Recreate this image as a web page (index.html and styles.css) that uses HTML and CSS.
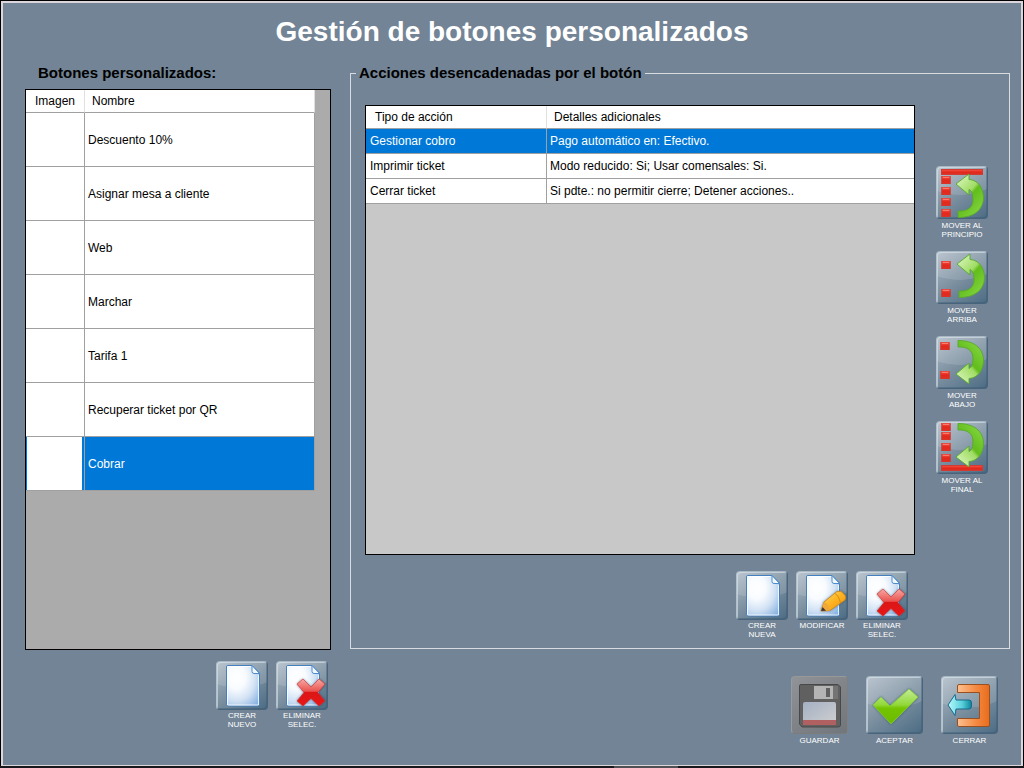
FILE: index.html
```html
<!DOCTYPE html>
<html lang="es">
<head>
<meta charset="utf-8">
<meta name="viewport" content="width=device-width, initial-scale=1">
<title>Gestión de botones personalizados</title>
<link rel="stylesheet" href="styles.css">
</head>
<body>
<svg class="defs" aria-hidden="true">
  <defs>
    <linearGradient id="green" x1="0" y1="0" x2=".7" y2="1"><stop offset="0" stop-color="#e4facc"/><stop offset=".5" stop-color="#a0dc64"/><stop offset=".58" stop-color="#62bc1c"/><stop offset="1" stop-color="#80d43c"/></linearGradient>
    <linearGradient id="red" x1="0" y1="0" x2="0" y2="1"><stop offset="0" stop-color="#f4584c"/><stop offset=".5" stop-color="#e4281c"/><stop offset="1" stop-color="#dc3024"/></linearGradient>
    <radialGradient id="paper" cx=".3" cy=".3" r=".95"><stop offset="0" stop-color="#fff"/><stop offset=".3" stop-color="#f8fbff"/><stop offset=".6" stop-color="#d2e2f4"/><stop offset="1" stop-color="#7caade"/></radialGradient>
    <linearGradient id="pencil" x1="0" y1="0" x2="1" y2="1"><stop offset="0" stop-color="#ffe070"/><stop offset=".5" stop-color="#fdb424"/><stop offset="1" stop-color="#f08c08"/></linearGradient>
    <linearGradient id="cross" x1="0" y1="0" x2="0" y2="1"><stop offset="0" stop-color="#f8a8a4"/><stop offset=".45" stop-color="#ea5450"/><stop offset=".5" stop-color="#dc1818"/><stop offset="1" stop-color="#e81818"/></linearGradient>
    <linearGradient id="tick" x1="0" y1="0" x2="0" y2="1"><stop offset="0" stop-color="#c4ec94"/><stop offset=".45" stop-color="#92d83c"/><stop offset=".55" stop-color="#74c400"/><stop offset="1" stop-color="#6cba00"/></linearGradient>
    <linearGradient id="orange" x1="0" y1="0" x2="1" y2="0"><stop offset="0" stop-color="#fcc090"/><stop offset=".6" stop-color="#f48840"/><stop offset="1" stop-color="#e86c1c"/></linearGradient>
    <linearGradient id="cyan" x1="0" y1="0" x2="1" y2="0"><stop offset="0" stop-color="#b8fafc"/><stop offset=".6" stop-color="#58d0dc"/><stop offset="1" stop-color="#0c8498"/></linearGradient>
    <linearGradient id="label" x1="0" y1="0" x2="1" y2="1"><stop offset="0" stop-color="#a4b0c4"/><stop offset="1" stop-color="#d0d0d0"/></linearGradient>
    <filter id="shadow" x="-20%" y="-20%" width="140%" height="140%"><feDropShadow dx="0" dy="0" stdDeviation="1" flood-color="#203848" flood-opacity=".6"/></filter>
  </defs>
  <symbol id="arrow" viewBox="0 0 52 53">
    <path d="M20 18 33 8V13.500C42 14 47.500 22 47.500 32 47 44 38 51.500 22 51.500V45C32 45.500 37 41 37 34 37 28 36 25 33 23.500V29Z" fill="url(#green)" stroke="#58a82c" stroke-width=".9" stroke-linejoin="round"/>
  </symbol>
  <symbol id="block" viewBox="0 0 10 8">
    <rect x=".5" y="0" width="9" height="8" fill="url(#red)" stroke="#c83c34" stroke-width=".6"/><path d="M2 1.500H8" stroke="#f87c70"/>
  </symbol>
  <symbol id="bar" viewBox="0 0 42 6">
    <rect x=".5" y=".5" width="41" height="5" fill="url(#red)" stroke="#d03c34"/>
  </symbol>
  <symbol id="sheet" viewBox="0 0 52 49">
    <path d="M12 4.500H36L43.500 12V43Q43.500 45 41 45H13Q10.500 45 10.500 43V6Q10.500 4.500 12 4.500Z" fill="url(#paper)" stroke="#4480c0"/>
    <path d="M11.500 44V5.500H35M11.500 44H42.500V14" fill="none" stroke="#fff" opacity=".8"/>
    <path d="M36 4.500V10.500Q36 12.500 38 12.500H43.500Z" fill="#f0f7ff" stroke="#4c8ccc"/>
  </symbol>
  <symbol id="delete" viewBox="0 0 52 49">
    <use href="#sheet"/>
    <path d="M27 18 35 26 43 18 49 23 42 31.500 49 40 43 45 35 37.500 27 45 21 40 28 31.500 21 23Z" fill="url(#cross)" stroke="#c83030" stroke-width=".6" stroke-linejoin="round" filter="url(#shadow)"/>
  </symbol>
</svg>

<div class="window">
  <h1 class="title">Gestión de botones personalizados</h1>

  <main class="main">
    <section class="buttons-panel">
      <h2 class="caption">Botones personalizados:</h2>
      <div class="list list-dark">
        <table class="grid grid-buttons">
          <thead><tr><th class="col-image">Imagen</th><th>Nombre</th></tr></thead>
          <tbody>
            <tr><td></td><td>Descuento 10%</td></tr>
            <tr><td></td><td>Asignar mesa a cliente</td></tr>
            <tr><td></td><td>Web</td></tr>
            <tr><td></td><td>Marchar</td></tr>
            <tr><td></td><td>Tarifa 1</td></tr>
            <tr><td></td><td>Recuperar ticket por QR</td></tr>
            <tr class="selected"><td class="thumb"></td><td>Cobrar</td></tr>
          </tbody>
        </table>
      </div>
      <div class="toolbar toolbar-left">
        <button class="tool" type="button"><span class="tile"><svg viewBox="0 0 52 49"><use href="#sheet"/></svg></span>CREAR NUEVO</button>
        <button class="tool" type="button"><span class="tile"><svg viewBox="0 0 52 49"><use href="#delete"/></svg></span>ELIMINAR SELEC.</button>
      </div>
    </section>

    <div class="right">
      <fieldset class="actions">
        <legend class="caption legend">Acciones desencadenadas por el botón</legend>
        <div class="actions-body">
          <div class="list list-light">
            <table class="grid grid-actions">
              <thead><tr><th class="col-type">Tipo de acción</th><th>Detalles adicionales</th></tr></thead>
              <tbody>
                <tr class="selected"><td>Gestionar cobro</td><td>Pago automático en: Efectivo.</td></tr>
                <tr><td>Imprimir ticket</td><td>Modo reducido: Si; Usar comensales: Si.</td></tr>
                <tr><td>Cerrar ticket</td><td>Si pdte.: no permitir cierre; Detener acciones..</td></tr>
              </tbody>
            </table>
          </div>
          <div class="order">
            <button class="tool move" type="button"><span class="tile"><svg viewBox="0 0 52 53">
              <use href="#bar" x="5" y="3" width="42" height="6"/>
              <use href="#block" x="5" y="10" width="10" height="8"/><use href="#block" x="5" y="21" width="10" height="8"/><use href="#block" x="5" y="32" width="10" height="8"/><use href="#block" x="5" y="43" width="10" height="8"/>
              <use href="#arrow" width="52" height="53"/></svg></span>MOVER AL PRINCIPIO</button>
            <button class="tool move" type="button"><span class="tile"><svg viewBox="0 0 52 53">
              <use href="#block" x="5" y="10" width="10" height="8"/><use href="#block" x="5" y="38" width="10" height="8"/>
              <use href="#arrow" x="1" y="-5" width="52" height="53"/></svg></span>MOVER ARRIBA</button>
            <button class="tool move" type="button"><span class="tile"><svg viewBox="0 0 52 53">
              <use href="#block" x="4" y="6" width="10" height="8"/><use href="#block" x="4" y="35" width="10" height="8"/>
              <use href="#arrow" width="52" height="53" transform="matrix(1 0 0 -1 0 56)"/></svg></span>MOVER ABAJO</button>
            <button class="tool move" type="button"><span class="tile"><svg viewBox="0 0 52 53">
              <use href="#block" x="5" y="2" width="10" height="8"/><use href="#block" x="5" y="11" width="10" height="8"/><use href="#block" x="5" y="22" width="10" height="8"/><use href="#block" x="5" y="33" width="10" height="8"/>
              <use href="#bar" x="5" y="44" width="42" height="6"/>
              <use href="#arrow" width="52" height="53" transform="matrix(1 0 0 -1 0 54)"/></svg></span>MOVER AL FINAL</button>
          </div>
        </div>
        <div class="toolbar toolbar-actions">
          <button class="tool" type="button"><span class="tile"><svg viewBox="0 0 52 49"><use href="#sheet"/></svg></span>CREAR NUEVA</button>
          <button class="tool" type="button"><span class="tile"><svg viewBox="0 0 52 49"><use href="#sheet"/>
            <g filter="url(#shadow)"><path d="M25 40 28 31 41 20.500Q45 19 48 23 51 26 49 29L34 39.500Z" fill="url(#pencil)" stroke="#c08420" stroke-width=".8"/><path d="M25 40 28 31Q33 33 34 39.500Z" fill="#f0a838"/><path d="M25 40 26.500 36 30 39.700Z" fill="#443830"/><path d="M39 22.500Q43 25 44.500 32" fill="none" stroke="#d48c10"/></g></svg></span>MODIFICAR</button>
          <button class="tool" type="button"><span class="tile"><svg viewBox="0 0 52 49"><use href="#delete"/></svg></span>ELIMINAR SELEC.</button>
        </div>
      </fieldset>

      <footer class="footer">
        <button class="tool main-action" type="button" disabled><span class="tile"><svg viewBox="0 0 57 58">
          <path d="M10 8.500H47L49.500 11V49Q49.500 51 47 51H11L8.500 48V10Q8.500 8.500 10 8.500Z" fill="#606060" stroke="#484848"/>
          <rect x="23" y="10" width="19" height="13" fill="#b4b4b4"/><rect x="42" y="10" width="5" height="13" fill="#747474"/><rect x="35" y="12" width="4" height="9" fill="#606060"/>
          <path d="M12 28Q12 26 14 26H43Q45 26 45 28V49H12Z" fill="url(#label)"/><rect x="12" y="44" width="33" height="5" fill="#b06060"/></svg></span>GUARDAR</button>
        <button class="tool main-action" type="button"><span class="tile"><svg viewBox="0 0 57 58">
          <path d="M7 29 15 21 24 30 43 13 52 21 25 48Z" fill="url(#tick)" stroke="#80c83c" stroke-width=".8" stroke-linejoin="round" filter="url(#shadow)"/></svg></span>ACEPTAR</button>
        <button class="tool main-action" type="button"><span class="tile"><svg viewBox="0 0 57 58">
          <path d="M18 8.500H47Q48.500 8.500 48.500 10V49Q48.500 50.500 47 50.500H18Q16.500 50.500 16.500 49V42.500H38.500V16.500H16.500V10Q16.500 8.500 18 8.500Z" fill="url(#orange)" stroke="#985020"/>
          <path d="M7 29 14 18.500 15 24H28Q30.500 24 30.500 27V30Q30.500 33 28 33H15L14 39.500Z" fill="url(#cyan)" stroke="#18688c" stroke-linejoin="round"/></svg></span>CERRAR</button>
      </footer>
    </div>
  </main>
</div>
<div class="strip"><span class="strip-item"></span></div>
</body>
</html>
```
FILE: styles.css
```css
* { box-sizing: border-box; }

body {
  margin: 0;
  min-height: 100vh;
  display: flex;
  flex-direction: column;
  background: #000;
  color: #000;
  font: 12px/14px "Liberation Sans", Arial, sans-serif;
}

.defs { position: absolute; width: 0; height: 0; }

.window {
  flex: 1;
  display: flex;
  flex-direction: column;
  margin: 1px 1px 0;
  border: 2px solid #dcd6dc;
  border-bottom-width: 1px;
  background: #728495;
}

.title {
  margin: 0;
  padding: 13px 0 12px;
  color: #fff;
  font-size: 28px;
  line-height: 32px;
  text-align: center;
}

.main {
  flex: 1;
  display: grid;
  grid-template-columns: 306px minmax(0, 1fr);
  gap: 19px;
  padding: 4px 11px 0 22px;
}

.caption {
  margin: 0;
  font-size: 15px;
  line-height: 18px;
  font-weight: bold;
}

.buttons-panel { display: flex; flex-direction: column; padding-bottom: 36px; }
.buttons-panel .caption { padding: 0 13px 7px; }

.list { flex: 1; border: 1px solid #000; }
.list-dark { background: #ababab; padding-right: 15px; }
.list-light { background: #c8c8c8; }

.grid {
  width: 100%;
  table-layout: fixed;
  border-collapse: separate;
  border-spacing: 0;
}
.grid th {
  height: 23px;
  padding: 0 7px;
  border-right: 1px solid #e0e0e0;
  border-bottom: 1px solid #a0a0a0;
  background: #fff;
  font-weight: normal;
  text-align: left;
}
.grid td {
  padding: 0 3px;
  border-right: 1px solid #a0a0a0;
  border-bottom: 1px solid #a0a0a0;
  background: #fff;
}
.grid tr > :first-child { padding-left: 4px; }
.grid th:first-child { padding: 0 0 0 9px; }
.grid-buttons td { height: 54px; }
.grid-actions td { height: 25px; }
.grid-actions th:last-child, .grid-actions td:last-child { border-right: 0; }
.col-image { width: 59px; }
.col-type { width: 181px; }
.grid .selected td { background: #0078d7; color: #fff; }
.grid .selected .thumb {
  background: #fff;
  box-shadow: inset 1px 0 #0078d7, inset -2px 0 #0078d7;
}

.toolbar { display: flex; justify-content: flex-end; gap: 8px; }
.toolbar-left { padding: 11px 3px 0 0; }
.toolbar-actions { padding: 16px 91px 9px 0; }

.tool {
  width: 52px;
  padding: 0;
  border: 0;
  background: none;
  color: #fff;
  display: flex;
  flex-direction: column;
  align-items: center;
  gap: 1px;
  font: 8px/9px "Liberation Sans", Arial, sans-serif;
  text-align: center;
}
.tool:disabled { color: #fff; }

.tile {
  width: 100%;
  border: 1px solid;
  border-color: #a8b8c4 #48647c #48647c #b0c0cc;
  border-radius: 4px;
  background:
    radial-gradient(ellipse 90% 55% at 45% 0, rgba(255, 255, 255, .12) 98%, transparent),
    linear-gradient(145deg, #b0bcc8, #7c90a0 50%, #4c6c84);
  box-shadow: inset 1px 1px rgba(220, 230, 236, .6), inset -1px -1px rgba(56, 88, 112, .4);
}
.tile svg { display: block; width: calc(100% + 2px); margin: -1px; }
.tool:disabled .tile {
  border-color: #989898 #808080 #7c7c7c #989ca0;
  background: linear-gradient(145deg, #909498, #808488 50%, #70767c);
  box-shadow: none;
}

.right { display: flex; flex-direction: column; padding-bottom: 20px; }

.actions {
  flex: 1;
  display: flex;
  flex-direction: column;
  min-width: 0;
  margin: 0;
  padding: 23px 10px 0 5px;
  border: 1px solid #d8dce0;
}
.legend { padding: 0 3px; }
.actions-body { flex: 1; display: flex; gap: 21px; padding-left: 9px; }
.order { display: flex; flex-direction: column; gap: 12px; padding: 61px 11px 0 0; }
.move { height: 73px; gap: 2px; }

.footer { display: flex; justify-content: flex-end; gap: 18px; padding: 27px 12px 0 0; }
.main-action { width: 57px; gap: 2px; }

.strip { height: 2px; background: #18181c; }
.strip-item { display: block; width: 64px; height: 2px; margin-left: 60%; background: #505054; }
```
